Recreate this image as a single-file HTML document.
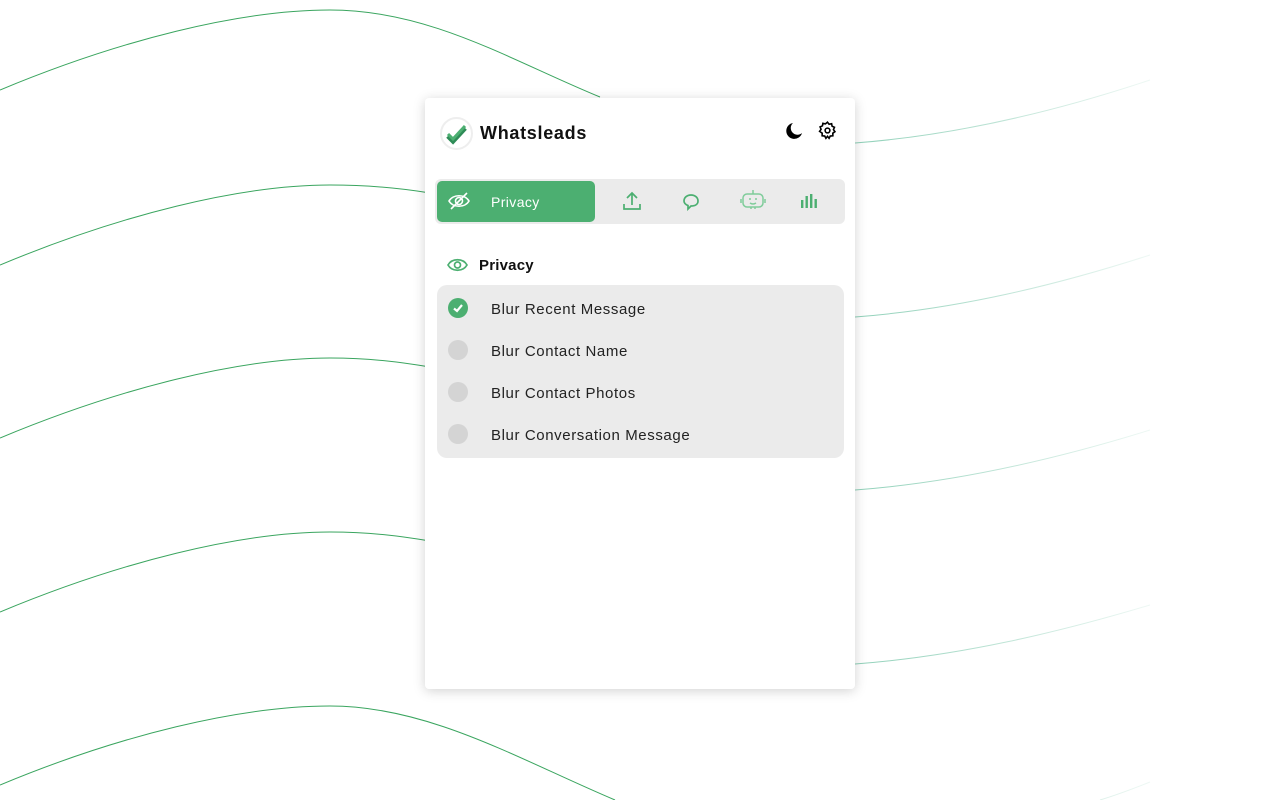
<!DOCTYPE html>
<html><head><meta charset="utf-8"><style>
*{box-sizing:border-box;margin:0;padding:0}
body{width:1280px;height:800px;background:#fff;position:relative;overflow:hidden;font-family:"Liberation Sans",sans-serif;color:#111}
svg.bg{position:absolute;left:0;top:0}
.panel{position:absolute;left:425px;top:98px;width:430px;height:591px;background:#fff;border-radius:4px;box-shadow:0 2px 12px rgba(0,0,0,.18)}
.logo{position:absolute;left:15px;top:19px;width:33px;height:33px;border-radius:50%;border:2px solid #eee;background:#fff}
.title{position:absolute;left:55px;top:25px;font-size:18px;font-weight:bold;letter-spacing:.7px}
.tabs{position:absolute;left:10px;top:81px;width:410px;height:45px;background:#ebebeb;border-radius:6px}
.act{position:absolute;left:2px;top:2px;width:158px;height:41px;background:#4caf71;border-radius:5px;color:#fff;font-size:14px;letter-spacing:.4px}
.sec{position:absolute;left:54px;top:159px;font-size:15px;font-weight:bold;letter-spacing:.2px}
.list{position:absolute;left:12px;top:187px;width:407px;height:173px;background:#ebebeb;border-radius:10px}
.item{position:absolute;left:54px;font-size:15px;color:#222;letter-spacing:.6px}
.dot{position:absolute;left:11px;width:20px;height:20px;border-radius:50%;background:#d4d4d4}
</style></head><body>
<svg class="bg" width="1280" height="800" fill="none">
<defs><linearGradient id="g" x1="855" x2="1150" y1="0" y2="0" gradientUnits="userSpaceOnUse"><stop offset="0" stop-color="#8fd0b8"/><stop offset="1" stop-color="#8fd0b8" stop-opacity=".15"/></linearGradient></defs>
<g stroke="#3aa55f" stroke-width="1">
<path d="M0,90 C120,40 240,10 330,10 C430,10 510,60 600,97"/>
<path d="M0,265 C120,215 240,185 330,185 C370,185 400,188 430,193"/>
<path d="M0,438 C120,388 240,358 330,358 C370,358 400,362 430,367"/>
<path d="M0,612 C120,562 240,532 330,532 C370,532 400,536 430,541"/>
<path d="M0,785 C120,735 240,706 330,706 C430,706 520,760 615,800"/>
</g>
<g stroke="url(#g)" stroke-width="1">
<path d="M855,143 C960,135 1060,110 1150,80"/>
<path d="M855,317 C960,309 1060,284 1150,255"/>
<path d="M855,490 C960,482 1060,458 1150,430"/>
<path d="M855,664 C960,656 1060,632 1150,605"/>
<path d="M1100,800 C1120,794 1135,788 1150,782"/>
</g>
</svg>
<div class="panel">
<div class="logo"><svg width="29" height="29" viewBox="0 0 29 29"><path d="M6,17 L11,22 L23,9" stroke="#2e8b57" stroke-width="5" fill="none"/><path d="M6,15 L11,20 L23,7" stroke="#4caf71" stroke-width="3" fill="none"/></svg></div>
<div class="title">Whatsleads</div>
<svg style="position:absolute;left:360px;top:24px" width="18" height="18" viewBox="0 0 18 18"><path d="M8,1 A8,8 0 1 0 17,11 A6.5,6.5 0 0 1 8,1Z" fill="#000"/></svg>
<svg style="position:absolute;left:393px;top:23px" width="19" height="19" viewBox="0 0 24 24" fill="none" stroke="#000" stroke-width="2"><circle cx="12" cy="12" r="3"/><path d="M12 1.5l2 2.6 3.2-.7.6 3.2 3 1.3-1.3 3 1.9 2.6-2.7 1.9.1 3.300-3.3.3-1.5 2.9-2-2.6-2 2.6-1.5-2.9-3.3-.3.1-3.3L2 13.1 3.9 10.5 2.6 7.4l3-1.3.6-3.2 3.2.7z"/></svg>
<div class="tabs">
<div class="act">
<svg style="position:absolute;left:11px;top:10px" width="22" height="20" viewBox="0 0 22 20" fill="none" stroke="#fff" stroke-width="1.6"><path d="M1,10 C5,3 17,3 21,10 C17,17 5,17 1,10Z"/><circle cx="11" cy="10" r="3.5"/><path d="M3,18 L19,2"/></svg>
<span style="position:absolute;left:54px;top:13px">Privacy</span></div>
<svg style="position:absolute;left:187px;top:12px" width="20" height="20" viewBox="0 0 20 20" fill="none" stroke="#4caf71" stroke-width="1.7"><path d="M10,14 V2 M5,7 L10,2 L15,7 M2,13 V18 H18 V13"/></svg>
<svg style="position:absolute;left:247px;top:14px" width="18" height="18" viewBox="0 0 18 18" fill="none" stroke="#4caf71" stroke-width="1.7"><path d="M9,2 C13,2 16,4.5 16,8 C16,11.5 13,13 9,13 L6,16 V12.5 C3.5,11.5 2,10 2,8 C2,4.5 5,2 9,2Z"/></svg>
<svg style="position:absolute;left:305px;top:9px" width="26" height="24" viewBox="0 0 26 24" fill="none" stroke="#7fcc9a" stroke-width="1.5"><rect x="3" y="6" width="20" height="13" rx="4"/><path d="M13,6 V2 M1,11 V15 M25,11 V15 M9,11 h2 M15,11 h2 M10,15 q3,2 6,0 M11,21 v-2 M15,21 v-2"/></svg>
<svg style="position:absolute;left:365px;top:14px" width="18" height="16" viewBox="0 0 18 16" fill="#4caf71"><rect x="1" y="7" width="2.4" height="8"/><rect x="5.5" y="3" width="2.4" height="12"/><rect x="10" y="1" width="2.4" height="14"/><rect x="14.5" y="6" width="2.4" height="9"/></svg>
</div>
<svg style="position:absolute;left:22px;top:159px" width="21" height="16" viewBox="0 0 21 16" fill="none" stroke="#4caf71" stroke-width="1.7"><path d="M1,8 C5,1 16,1 20,8 C16,15 5,15 1,8Z"/><circle cx="10.5" cy="8" r="3"/></svg>
<div class="sec">Privacy</div>
<div class="list">
<div class="dot" style="top:13px;background:#4caf71"><svg width="20" height="20" viewBox="0 0 20 20" fill="none" stroke="#fff" stroke-width="2.2"><path d="M6,10.5 L9,13 L14,7"/></svg></div>
<div class="item" style="top:16px">Blur Recent Message</div>
<div class="dot" style="top:55px"></div><div class="item" style="top:58px">Blur Contact Name</div>
<div class="dot" style="top:97px"></div><div class="item" style="top:100px">Blur Contact Photos</div>
<div class="dot" style="top:139px"></div><div class="item" style="top:142px">Blur Conversation Message</div>
</div>
</div>
</body></html>
